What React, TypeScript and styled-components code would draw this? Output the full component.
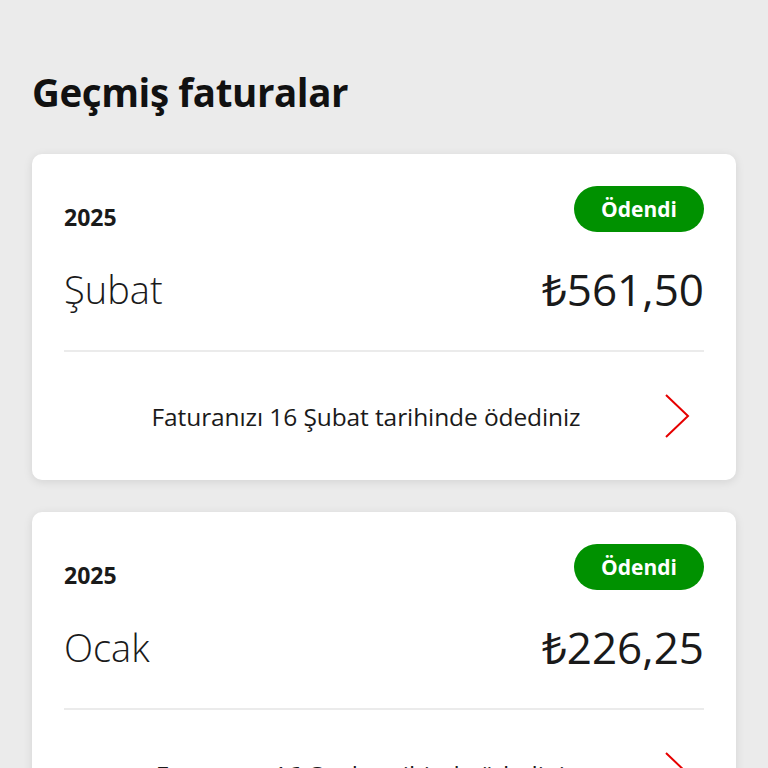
import React from 'react';
import styled, { createGlobalStyle } from 'styled-components';

const GlobalStyle = createGlobalStyle`
  html, body {
    margin: 0;
    padding: 0;
    background-color: #ebebeb;
    font-family: "Open Sans", "Noto Sans", sans-serif;
    color: #1a1a1a;
  }
`;

const Page = styled.div`
  padding: 64px 32px 32px;
  display: flex;
  flex-direction: column;
`;

const Title = styled.h1`
  margin: 0 0 34px;
  font-size: 38.5px;
  line-height: 56px;
  font-weight: 700;
  letter-spacing: -0.4px;
  color: #111;
`;

const List = styled.div`
  display: flex;
  flex-direction: column;
  gap: 32px;
`;

const Card = styled.div`
  background: #fff;
  border-radius: 10px;
  box-shadow: 0 2px 10px rgba(0, 0, 0, 0.1);
  padding: 32px 32px 0;
`;

const TopRow = styled.div`
  display: flex;
  justify-content: space-between;
  align-items: flex-end;
  height: 46px;
`;

const Year = styled.span`
  font-size: 23px;
  font-weight: 700;
  line-height: 30px;
`;

const Badge = styled.span`
  display: inline-flex;
  align-items: center;
  justify-content: center;
  height: 46px;
  padding: 0 27px;
  border-radius: 23px;
  background: #009100;
  color: #fff;
  font-size: 21px;
  font-weight: 700;
  align-self: flex-start;
`;

const AmountRow = styled.div`
  display: flex;
  justify-content: space-between;
  align-items: center;
  height: 70px;
  padding: 22px 0 26px;
  border-bottom: 2px solid #ebebeb;
`;

const Month = styled.span`
  font-size: 38px;
  font-weight: 300;
`;

const Amount = styled.span`
  font-size: 44px;
  font-weight: 400;
`;

const Footer = styled.div`
  display: flex;
  align-items: center;
  justify-content: center;
  position: relative;
  height: 128px;
  padding-right: 36px;
`;

const FooterText = styled.span`
  font-size: 24.5px;
  font-weight: 400;
  letter-spacing: -0.1px;
`;

const Chevron = styled.svg`
  position: absolute;
  right: 14px;
  top: 50%;
  transform: translateY(-50%);
`;

const bills = [
  { year: '2025', month: 'Şubat', amount: '₺561,50', paidText: 'Faturanızı 16 Şubat tarihinde ödediniz' },
  { year: '2025', month: 'Ocak', amount: '₺226,25', paidText: 'Faturanızı 16 Ocak tarihinde ödediniz' },
];

export default function App() {
  return (
    <Page>
      <GlobalStyle />
      <Title>Geçmiş faturalar</Title>
      <List>
        {bills.map((bill) => (
          <Card key={bill.month}>
            <TopRow>
              <Year>{bill.year}</Year>
              <Badge>Ödendi</Badge>
            </TopRow>
            <AmountRow>
              <Month>{bill.month}</Month>
              <Amount>{bill.amount}</Amount>
            </AmountRow>
            <Footer>
              <FooterText>{bill.paidText}</FooterText>
              <Chevron width="26" height="46" viewBox="0 0 26 46">
                <polyline points="2,2 24,23 2,44" fill="none" stroke="#e60000" strokeWidth="2" />
              </Chevron>
            </Footer>
          </Card>
        ))}
      </List>
    </Page>
  );
}
